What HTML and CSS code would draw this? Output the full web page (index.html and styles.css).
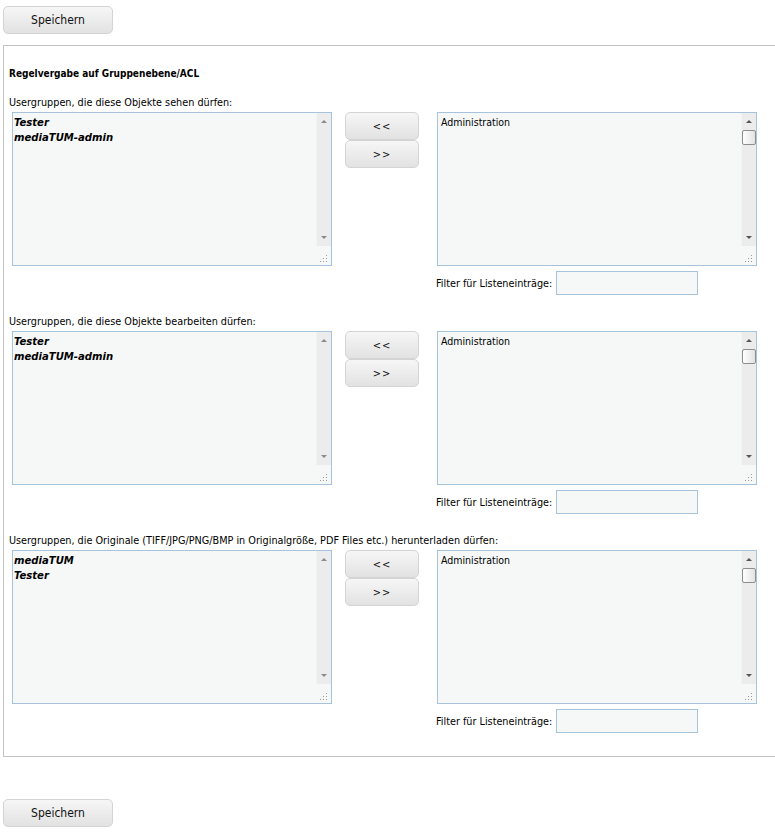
FILE: index.html
```html
<!DOCTYPE html>
<html lang="de">
<head>
<meta charset="utf-8">
<title>ACL</title>
<link rel="stylesheet" href="styles.css">
</head>
<body>
<div class="bar top"><button class="btn save">Speichern</button></div>

<div class="acl">
  <div class="heading">Regelvergabe auf Gruppenebene/ACL</div>

  <div class="section">
    <div class="label">Usergruppen, die diese Objekte sehen dürfen:</div>
    <div class="grid">
      <div class="list left">
        <div class="items">
          <div class="item sel">Tester</div>
          <div class="item sel">mediaTUM-admin</div>
        </div>
        <div class="sb off">
          <div class="arrow"><span class="tri up"></span></div>
          <div class="track"></div>
          <div class="arrow"><span class="tri down"></span></div>
          <div class="corner"></div>
        </div>
      </div>
      <div class="movers">
        <button class="btn mv">&lt;&lt;</button>
        <button class="btn mv">&gt;&gt;</button>
      </div>
      <div class="list right">
        <div class="items">
          <div class="item">Administration</div>
        </div>
        <div class="sb">
          <div class="arrow"><span class="tri up"></span></div>
          <div class="track"><div class="thumb"></div></div>
          <div class="arrow"><span class="tri down"></span></div>
          <div class="corner"></div>
        </div>
      </div>
      <div class="filter">
        <span class="flabel">Filter für Listeneinträge:</span>
        <div class="finput"></div>
      </div>
    </div>
  </div>

  <div class="section">
    <div class="label">Usergruppen, die diese Objekte bearbeiten dürfen:</div>
    <div class="grid">
      <div class="list left">
        <div class="items">
          <div class="item sel">Tester</div>
          <div class="item sel">mediaTUM-admin</div>
        </div>
        <div class="sb off">
          <div class="arrow"><span class="tri up"></span></div>
          <div class="track"></div>
          <div class="arrow"><span class="tri down"></span></div>
          <div class="corner"></div>
        </div>
      </div>
      <div class="movers">
        <button class="btn mv">&lt;&lt;</button>
        <button class="btn mv">&gt;&gt;</button>
      </div>
      <div class="list right">
        <div class="items">
          <div class="item">Administration</div>
        </div>
        <div class="sb">
          <div class="arrow"><span class="tri up"></span></div>
          <div class="track"><div class="thumb"></div></div>
          <div class="arrow"><span class="tri down"></span></div>
          <div class="corner"></div>
        </div>
      </div>
      <div class="filter">
        <span class="flabel">Filter für Listeneinträge:</span>
        <div class="finput"></div>
      </div>
    </div>
  </div>

  <div class="section">
    <div class="label">Usergruppen, die Originale (TIFF/JPG/PNG/BMP in Originalgröße, PDF Files etc.) herunterladen dürfen:</div>
    <div class="grid">
      <div class="list left">
        <div class="items">
          <div class="item sel">mediaTUM</div>
          <div class="item sel">Tester</div>
        </div>
        <div class="sb off">
          <div class="arrow"><span class="tri up"></span></div>
          <div class="track"></div>
          <div class="arrow"><span class="tri down"></span></div>
          <div class="corner"></div>
        </div>
      </div>
      <div class="movers">
        <button class="btn mv">&lt;&lt;</button>
        <button class="btn mv">&gt;&gt;</button>
      </div>
      <div class="list right">
        <div class="items">
          <div class="item">Administration</div>
        </div>
        <div class="sb">
          <div class="arrow"><span class="tri up"></span></div>
          <div class="track"><div class="thumb"></div></div>
          <div class="arrow"><span class="tri down"></span></div>
          <div class="corner"></div>
        </div>
      </div>
      <div class="filter">
        <span class="flabel">Filter für Listeneinträge:</span>
        <div class="finput"></div>
      </div>
    </div>
  </div>
</div>

<div class="bar bottom"><button class="btn save">Speichern</button></div>
</body>
</html>
```

FILE: styles.css
```css
html, body {
  margin: 0;
  padding: 0;
  background: #ffffff;
  overflow: hidden;
}
body {
  padding: 6px 0 0 3px;
  font-family: "DejaVu Sans Condensed", "DejaVu Sans", sans-serif;
  font-size: 10.75px;
  color: #000;
}
.bar { display: flex; }
.bar.top { margin-bottom: 11px; }
.bar.bottom { margin-top: 42px; }

.btn {
  font-family: "DejaVu Sans Condensed", "DejaVu Sans", sans-serif;
  color: #111;
  border: 1px solid #d4d4d4;
  border-radius: 5px;
  background: linear-gradient(#f6f6f6, #e2e2e2);
  padding: 0;
  margin: 0;
  cursor: pointer;
}
.btn.save {
  width: 110px;
  height: 28px;
  font-size: 12px;
}

.acl {
  width: 790px;
  border: 1px solid #c3c3c3;
  padding: 21px 0 23px 4px;
  box-sizing: border-box;
}
.heading {
  font-weight: bold;
  font-size: 10px;
  line-height: 14px;
  margin-bottom: 15px;
  margin-left: 1px;
}
.section { margin-bottom: 20px; }
.section:last-child { margin-bottom: 0; }
.label {
  line-height: 14px;
  height: 14px;
  margin-bottom: 2px;
  margin-left: 1px;
  white-space: nowrap;
}
.grid {
  display: grid;
  grid-template-columns: 320px 74px 325px;
  column-gap: 13px;
  padding-left: 4px;
}
.grid > .list.right { margin-left: 5px; }
.grid > .filter { grid-column: 3; }

.list {
  display: flex;
  height: 154px;
  box-sizing: border-box;
  border: 1px solid #a8c4dd;
  background: #f6f8f8;
}
.items {
  flex: 1;
  padding: 2px 0 0 1px;
  font-size: 11.2px;
  line-height: 15px;
}
.item.sel {
  font-weight: bold;
  font-style: italic;
}
.list.right .item { padding-left: 2px; font-size: 10.5px; }

.sb {
  width: 15px;
  display: flex;
  flex-direction: column;
}
.sb .arrow {
  height: 17px;
  background: #ececec;
  border-left: 1px solid #f3f3f3;
  display: flex;
  align-items: center;
  justify-content: center;
}
.sb .track {
  flex: 1;
  background: #ececec;
  border-left: 1px solid #f3f3f3;
  display: flex;
  flex-direction: column;
}
.sb .corner {
  height: 15px;
  background:
    radial-gradient(circle, #9a9a9a 0.7px, transparent 0.8px) 0 0 / 3px 3px;
  -webkit-mask: linear-gradient(135deg, transparent 55%, #000 55%);
  mask: linear-gradient(135deg, transparent 55%, #000 55%);
  margin: 2px 2px 2px 3px;
}
.tri {
  width: 0;
  height: 0;
  border-left: 3px solid transparent;
  border-right: 3px solid transparent;
}
.tri.up { border-bottom: 3px solid #555; }
.tri.down { border-top: 3px solid #555; }
.sb.off .tri.up { border-bottom-color: #8a8a8a; }
.sb.off .tri.down { border-top-color: #8a8a8a; }
.thumb {
  height: 15px;
  box-sizing: border-box;
  border: 1px solid #8e8e8e;
  border-radius: 2px;
  background: linear-gradient(90deg, #ffffff, #e2e2e2);
}

.movers {
  display: flex;
  flex-direction: column;
}
.btn.mv {
  width: 74px;
  height: 28px;
  font-size: 11px;
  letter-spacing: 1px;
}

.filter {
  display: flex;
  align-items: center;
  margin-top: 5px;
  margin-left: 4px;
  height: 24px;
}
.flabel { margin-right: 4px; white-space: nowrap; }
.finput {
  width: 142px;
  height: 24px;
  box-sizing: border-box;
  border: 1px solid #a8c4dd;
  background: #f6f8f8;
}
```
